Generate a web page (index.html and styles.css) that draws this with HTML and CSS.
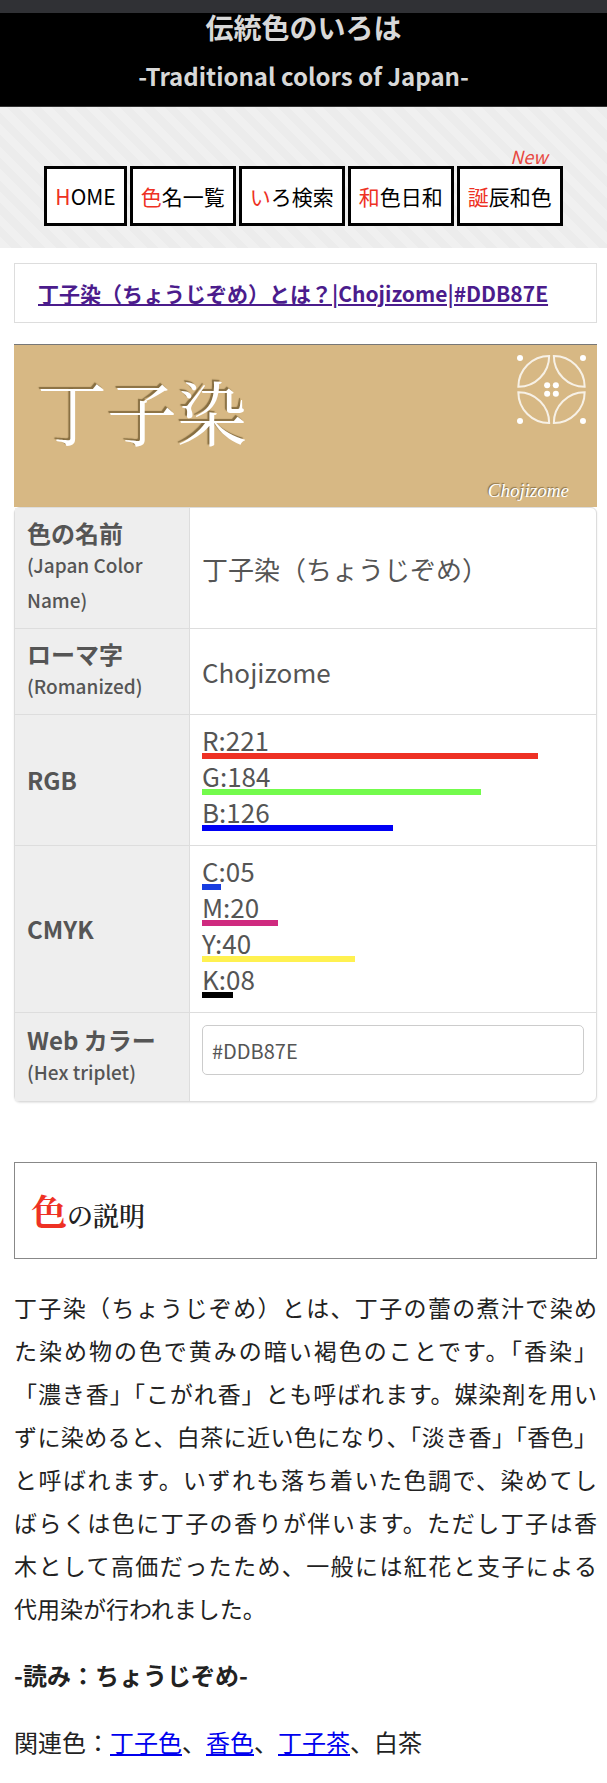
FILE: index.html
```html
<!DOCTYPE html>
<html lang="ja">
<head>
    <meta charset="UTF-8">
    <meta name="viewport" content="width=device-width, initial-scale=1.0">
    <title>丁子染（ちょうじぞめ）とは？|Chojizome|#DDB87E</title>
    <link rel="stylesheet" href="styles.css">
</head>
<body>

    <header class="header">
        <div class="site-title">伝統色のいろは</div>
        <div class="site-subtitle">-Traditional colors of Japan-</div>
    </header>

    <nav class="nav">
        <a href="#" class="nav-item">HOME</a>
        <a href="#" class="nav-item">色名一覧</a>
        <a href="#" class="nav-item">いろ検索</a>
        <a href="#" class="nav-item">和色日和</a>
        <a href="#" class="nav-item">誕辰和色<span class="nav-new">New</span></a>
    </nav>

    <main class="container">
        <h1 class="page-title"><a href="#">丁子染（ちょうじぞめ）とは？|Chojizome|#DDB87E</a></h1>

        <div class="banner">
            <div class="banner-name">丁子染</div>
            <svg class="banner-mark" viewBox="48 44 212 212" aria-hidden="true">
                <g fill="none" stroke="#fff" stroke-opacity="0.8" stroke-width="6">
                    <path d="M55 142A92 92 0 0 1 147 50A92 92 0 0 1 55 142Z"/>
                    <path d="M161 50A92 92 0 0 1 253 142A92 92 0 0 1 161 50Z"/>
                    <path d="M55 158A92 92 0 0 1 147 250A92 92 0 0 1 55 158Z"/>
                    <path d="M253 158A92 92 0 0 1 161 250A92 92 0 0 1 253 158Z"/>
                </g>
                <g fill="#fff">
                    <circle cx="60" cy="56" r="9"/>
                    <circle cx="248" cy="56" r="9"/>
                    <circle cx="60" cy="244" r="9"/>
                    <circle cx="248" cy="244" r="9"/>
                    <circle cx="141" cy="137" r="9"/>
                    <circle cx="167" cy="137" r="9"/>
                    <circle cx="141" cy="163" r="9"/>
                    <circle cx="167" cy="163" r="9"/>
                </g>
            </svg>
            <div class="banner-roman">Chojizome</div>
        </div>

        <table class="color-table">
            <tr>
                <th scope="row">色の名前<small>(Japan Color Name)</small></th>
                <td>丁子染（ちょうじぞめ）</td>
            </tr>
            <tr>
                <th scope="row">ローマ字<small>(Romanized)</small></th>
                <td>Chojizome</td>
            </tr>
            <tr>
                <th scope="row">RGB</th>
                <td>
                    <div class="bar red" style="width: 88%">R:221</div>
                    <div class="bar green" style="width: 73%">G:184</div>
                    <div class="bar blue" style="width: 50%">B:126</div>
                </td>
            </tr>
            <tr>
                <th scope="row">CMYK</th>
                <td>
                    <div class="bar cyan" style="width: 5%">C:05</div>
                    <div class="bar magenta" style="width: 20%">M:20</div>
                    <div class="bar yellow" style="width: 40%">Y:40</div>
                    <div class="bar black" style="width: 8%">K:08</div>
                </td>
            </tr>
            <tr>
                <th scope="row"><label for="hex">Web カラー<small>(Hex triplet)</small></label></th>
                <td class="hex-cell"><input type="text" id="hex" class="hex-input" value="#DDB87E"></td>
            </tr>
        </table>

        <h2 class="section-title">色の説明</h2>

        <p class="description">
            丁子染（ちょうじぞめ）とは、丁子の蕾の煮汁で染め<br>
            た染め物の色で黄みの暗い褐色のことです。「香染」<br>
            「濃き香」「こがれ香」とも呼ばれます。媒染剤を用い<br>
            ずに染めると、白茶に近い色になり、「淡き香」「香色」<br>
            と呼ばれます。いずれも落ち着いた色調で、染めてし<br>
            ばらくは色に丁子の香りが伴います。ただし丁子は香<br>
            木として高価だったため、一般には紅花と支子による<br>
            <span class="last-line">代用染が行われました。</span>
        </p>
        <p><strong>-読み：ちょうじぞめ-</strong></p>
        <p>関連色：<a href="#">丁子色</a>、<a href="#">香色</a>、<a href="#">丁子茶</a>、白茶</p>
    </main>

</body>
</html>
```
FILE: styles.css
```css
* {
    margin: 0;
    padding: 0;
    box-sizing: border-box;
}

body {
    font-family: 'Noto Sans CJK JP', sans-serif;
    font-size: 24px;
    line-height: 43px;
    color: #222;
    background: #fff;
}

.header {
    background: #000;
    border-top: 13px solid #303135;
    border-bottom: 1px solid #333;
    padding-bottom: 5px;
    text-align: center;
    color: #d8d8d8;
    font-weight: bold;
}

.site-title {
    font-size: 28px;
    line-height: 28px;
}

.site-subtitle {
    margin-top: 10px;
    font-size: 24px;
    line-height: 50px;
}

.nav {
    display: flex;
    justify-content: center;
    gap: 3px;
    padding: 59px 8px 22px;
    background: repeating-linear-gradient(45deg, #f0f0f0 0, #f0f0f0 8px, #ececec 8px, #ececec 16px);
}

.nav-item {
    position: relative;
    padding: 0 8px;
    border: 3px solid #000;
    background: #fff;
    color: #000;
    font-size: 21px;
    line-height: 54px;
    text-decoration: none;
}

.nav-item::first-letter {
    color: #ee3124;
}

.nav-new {
    position: absolute;
    top: -25px;
    right: 12px;
    color: #e8473f;
    font-size: 18px;
    font-style: italic;
    line-height: 24px;
}

.container {
    padding: 15px 10px 20px 14px;
}

.page-title {
    padding: 1px 23px;
    border: 1px solid #ddd;
    font-size: 21px;
    font-weight: bold;
    line-height: 56px;
}

.page-title a {
    color: #4b1c8c;
}

.banner {
    display: grid;
    grid-template-columns: 1fr auto;
    grid-template-rows: 1fr auto;
    height: 163px;
    margin-top: 21px;
    padding: 9px 10px 0 23px;
    border-top: 1px solid #777;
    background: #d7b884;
    color: #fff;
}

.banner-name {
    font-family: 'Noto Serif CJK JP', 'Noto Sans CJK JP', serif;
    font-size: 70px;
    line-height: 114px;
    text-shadow: -2px -2px 1px rgba(80, 60, 20, 0.6);
}

.banner-mark {
    width: 71px;
    height: 71px;
}

.banner-roman {
    grid-column: 1 / 3;
    padding-right: 18px;
    font-family: 'Liberation Serif', serif;
    font-size: 19px;
    font-style: italic;
    line-height: 32px;
    text-align: right;
    text-shadow: -1px -1px 1px rgba(80, 60, 20, 0.6);
}

.color-table {
    width: 100%;
    border: 1px solid #ddd;
    border-radius: 6px;
    border-spacing: 0;
    box-shadow: 0 1px 2px rgba(0, 0, 0, 0.1);
    color: #555;
}

.color-table th,
.color-table td {
    padding: 11px 12px;
    border-bottom: 1px solid #ddd;
    text-align: left;
    vertical-align: middle;
}

.color-table tr:last-child th,
.color-table tr:last-child td {
    border-bottom: none;
}

.color-table th {
    width: 175px;
    border-right: 1px solid #ddd;
    background: #eee;
    font-size: 24px;
    font-weight: bold;
    line-height: 28px;
}

.color-table small {
    display: block;
    font-size: 19px;
    font-weight: 500;
    line-height: 35px;
}

.color-table td {
    font-size: 26px;
}

.bar {
    margin-bottom: 3px;
    border-bottom: 6px solid;
    line-height: 27px;
    white-space: nowrap;
}

.red { border-color: #ee3124; }
.green { border-color: #73fb4c; }
.blue { border-color: #0000f5; }
.cyan { border-color: #183de0; }
.magenta { border-color: #cf2a7f; }
.yellow { border-color: #fff150; }
.black { border-color: #000; }

.color-table .hex-cell {
    padding: 12px 12px 26px;
    vertical-align: top;
}

.hex-input {
    display: block;
    width: 100%;
    height: 50px;
    padding: 0 9px;
    border: 1px solid #ccc;
    border-radius: 5px;
    color: #555;
    font-family: inherit;
    font-size: 20px;
}

.section-title {
    margin: 60px 0 27px;
    padding: 26px 16px 18px;
    border: 1px solid #888;
    font-family: 'Noto Serif CJK JP', 'Noto Sans CJK JP', serif;
    font-size: 26px;
    font-weight: 600;
    line-height: 51px;
}

.section-title::first-letter {
    color: #ee3124;
    font-size: 36px;
    font-weight: bold;
    line-height: 36px;
}

p {
    margin-bottom: 24px;
}

p:last-child {
    margin-bottom: 0;
}

p a {
    color: #0000ee;
}

.description {
    margin-bottom: 23px;
    font-size: 23px;
    text-align: justify;
    text-align-last: justify;
}

.last-line {
    display: block;
    text-align-last: left;
}
```
